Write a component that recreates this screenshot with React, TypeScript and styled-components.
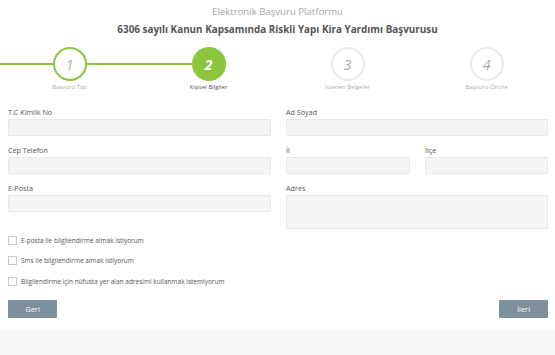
import React from 'react';
import styled, { createGlobalStyle, css } from 'styled-components';

const GlobalStyle = createGlobalStyle`
  html, body { margin: 0; padding: 0; background: #fff; }
  body { font-family: "Open Sans", "Liberation Sans", sans-serif; }
  * { box-sizing: border-box; }
`;

const green = '#8cc63f';

type StepState = 'done' | 'active' | 'todo';

const steps: { no: number; label: string; state: StepState; left: boolean; right: boolean }[] = [
  { no: 1, label: 'Başvuru Tipi', state: 'done', left: true, right: true },
  { no: 2, label: 'Kişisel Bilgiler', state: 'active', left: true, right: false },
  { no: 3, label: 'İstenen Belgeler', state: 'todo', left: false, right: false },
  { no: 4, label: 'Başvuru Önizle', state: 'todo', left: false, right: false },
];

const checks = [
  'E-posta ile bilgilendirme almak istiyorum',
  'Sms ile bilgilendirme almak istiyorum',
  'Bilgilendirme için nüfusta yer alan adresimi kullanmak istemiyorum',
];

export default function App() {
  return (
    <Page>
      <GlobalStyle />
      <Header>
        <Platform>Elektronik Başvuru Platformu</Platform>
        <Heading>6306 sayılı Kanun Kapsamında Riskli Yapı Kira Yardımı Başvurusu</Heading>
      </Header>

      <Stepper>
        {steps.map((s) => (
          <Step key={s.no} $left={s.left} $right={s.right}>
            <Circle $state={s.state}>{s.no}</Circle>
            <StepLabel $active={s.state === 'active'}>{s.label}</StepLabel>
          </Step>
        ))}
      </Stepper>

      <Form>
        <Column>
          <Field>
            <Label>T.C Kimlik No</Label>
            <Input />
          </Field>
          <Field>
            <Label>Cep Telefon</Label>
            <Input />
          </Field>
          <Field>
            <Label>E-Posta</Label>
            <Input />
          </Field>
        </Column>
        <Column>
          <Field>
            <Label>Ad Soyad</Label>
            <Input />
          </Field>
          <Pair>
            <Field>
              <Label>İl</Label>
              <Input />
            </Field>
            <Field>
              <Label>İlçe</Label>
              <Input />
            </Field>
          </Pair>
          <Field>
            <Label>Adres</Label>
            <TextArea />
          </Field>
        </Column>
      </Form>

      <Checks>
        {checks.map((c) => (
          <CheckRow key={c}>
            <Box />
            <span>{c}</span>
          </CheckRow>
        ))}
      </Checks>

      <Actions>
        <Button>Geri</Button>
        <Button>İleri</Button>
      </Actions>
      <Footer />
    </Page>
  );
}

const Page = styled.div`
  width: 555px;
  height: 355px;
  display: flex;
  flex-direction: column;
  overflow: hidden;
`;

const Header = styled.div`
  display: flex;
  flex-direction: column;
  align-items: center;
  padding-top: 4px;
`;

const Platform = styled.div`
  font-size: 9.6px;
  color: #a6a6a6;
  line-height: 16px;
`;

const Heading = styled.div`
  font-size: 9.9px;
  font-weight: 700;
  color: #555;
  line-height: 18px;
`;

const Stepper = styled.div`
  display: grid;
  grid-template-columns: repeat(4, 139px);
  margin-top: 9px;
`;

const half = css`
  content: '';
  position: absolute;
  top: 16px;
  height: 2px;
  width: 50%;
  background: ${green};
`;

const Step = styled.div<{ $left: boolean; $right: boolean }>`
  position: relative;
  display: flex;
  flex-direction: column;
  align-items: center;
  &::before {
    ${half};
    left: 0;
    display: ${(p) => (p.$left ? 'block' : 'none')};
  }
  &::after {
    ${half};
    right: 0;
    display: ${(p) => (p.$right ? 'block' : 'none')};
  }
`;

const Circle = styled.div<{ $state: StepState }>`
  position: relative;
  z-index: 1;
  width: 34px;
  height: 34px;
  border-radius: 50%;
  display: flex;
  align-items: center;
  justify-content: center;
  font-size: 14px;
  font-style: italic;
  font-weight: ${(p) => (p.$state === 'active' ? 700 : 400)};
  background: ${(p) => (p.$state === 'active' ? green : '#fff')};
  color: ${(p) => (p.$state === 'active' ? '#fff' : '#aaa')};
  border: 2px solid
    ${(p) => (p.$state === 'todo' ? '#ede9e4' : green)};
`;

const StepLabel = styled.div<{ $active: boolean }>`
  margin-top: 2px;
  font-size: 6px;
  line-height: 8px;
  color: ${(p) => (p.$active ? '#555' : '#aaa')};
`;

const Form = styled.div`
  display: grid;
  grid-template-columns: 263px 262px;
  column-gap: 15px;
  padding: 0 7px 0 8px;
  margin-top: 17px;
`;

const Column = styled.div`
  display: flex;
  flex-direction: column;
  gap: 10px;
`;

const Pair = styled.div`
  display: grid;
  grid-template-columns: 124px 123px;
  column-gap: 15px;
`;

const Field = styled.div`
  display: flex;
  flex-direction: column;
`;

const Label = styled.label`
  font-size: 7.2px;
  line-height: 9px;
  color: #555;
  margin-bottom: 2px;
`;

const fieldBox = css`
  display: block;
  width: 100%;
  border: 1px solid #e8e8e8;
  background: #f5f5f5;
  border-radius: 1px;
  outline: none;
  padding: 0;
  margin: 0;
`;

const Input = styled.input`
  ${fieldBox};
  height: 17px;
`;

const TextArea = styled.textarea`
  ${fieldBox};
  height: 34px;
  resize: none;
`;

const Checks = styled.div`
  display: flex;
  flex-direction: column;
  gap: 10.5px;
  padding-left: 8px;
  margin-top: 6px;
`;

const CheckRow = styled.label`
  display: flex;
  align-items: center;
  gap: 4px;
  font-size: 6.5px;
  color: #555;
  height: 10px;
`;

const Box = styled.span`
  width: 9px;
  height: 9px;
  border: 1px solid #c8c8c8;
  background: #fff;
`;

const Actions = styled.div`
  display: flex;
  justify-content: space-between;
  padding: 0 7px 0 8px;
  margin-top: 14px;
`;

const Button = styled.button`
  width: 49px;
  height: 18px;
  border: none;
  border-radius: 1px;
  background: #7b909c;
  color: #fff;
  font-family: inherit;
  font-size: 7.5px;
  padding: 0;
  cursor: pointer;
`;

const Footer = styled.div`
  margin-top: auto;
  height: 25px;
  background: #f7f7f7;
`;
